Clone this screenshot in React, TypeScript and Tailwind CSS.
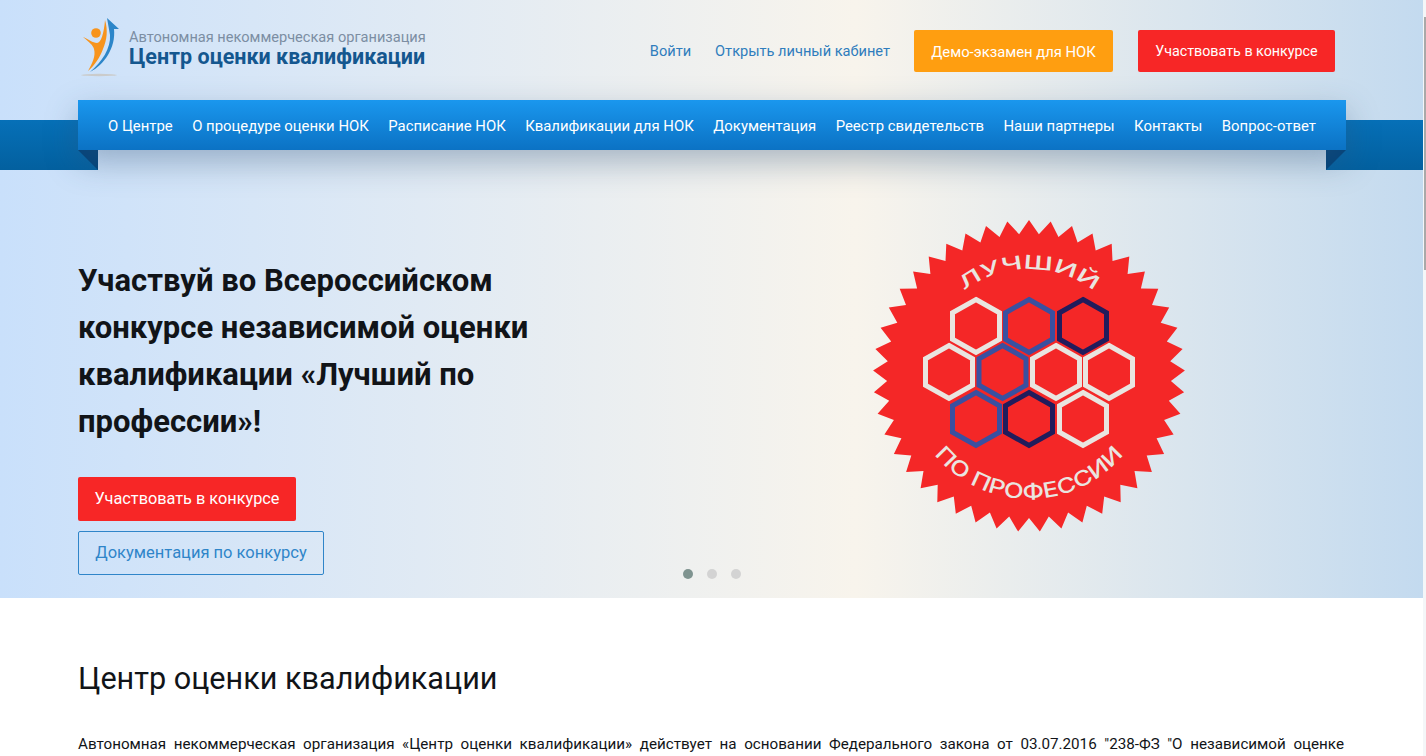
const navItems = [
  'О Центре',
  'О процедуре оценки НОК',
  'Расписание НОК',
  'Квалификации для НОК',
  'Документация',
  'Реестр свидетельств',
  'Наши партнеры',
  'Контакты',
  'Вопрос-ответ',
]

// hexagon centres in the badge, colour per cell
const hexes = [
  { x: 126, y: 126, c: '#e9e5e0' },
  { x: 179, y: 126, c: '#3a50a0' },
  { x: 233, y: 126, c: '#211c5c' },
  { x: 99, y: 172, c: '#e9e5e0' },
  { x: 152.5, y: 172, c: '#3a50a0' },
  { x: 206, y: 172, c: '#e9e5e0' },
  { x: 259, y: 172, c: '#e9e5e0' },
  { x: 126, y: 219, c: '#3a50a0' },
  { x: 179, y: 219, c: '#211c5c' },
  { x: 233, y: 219, c: '#e9e5e0' },
]

function hexPoints(x: number, y: number) {
  const rx = 23.5
  const ry = 26.5
  return [
    [x, y - ry],
    [x + rx, y - ry / 2],
    [x + rx, y + ry / 2],
    [x, y + ry],
    [x - rx, y + ry / 2],
    [x - rx, y - ry / 2],
  ]
    .map(p => p.join(','))
    .join(' ')
}

function starPoints() {
  const pts: string[] = []
  const n = 45
  for (let i = 0; i < n * 2; i++) {
    const r = i % 2 === 0 ? 156 : 142
    const a = (Math.PI * i) / n - Math.PI / 2
    pts.push(`${(179 + r * Math.cos(a)).toFixed(1)},${(176 + r * Math.sin(a)).toFixed(1)}`)
  }
  return pts.join(' ')
}

function Badge() {
  return (
    <svg width="360" height="350" viewBox="0 0 360 350" className="block">
      <polygon points={starPoints()} fill="#f42727" />
      {hexes.map((h, i) => (
        <polygon key={i} points={hexPoints(h.x, h.y)} fill="none" stroke={h.c} strokeWidth="5" />
      ))}
      <defs>
        <path id="badge-top" d="M 72 176 A 107 107 0 0 1 286 176" />
        <path id="badge-bottom" d="M 56 176 A 123 123 0 0 0 302 176" />
      </defs>
      <text fontFamily="Inter, sans-serif" fontSize="19" fontWeight="500" fill="#e9e5e0">
        <textPath href="#badge-top" startOffset="50%" textAnchor="middle" textLength="140" lengthAdjust="spacingAndGlyphs">
          ЛУЧШИЙ
        </textPath>
      </text>
      <text fontFamily="Inter, sans-serif" fontSize="21" fontWeight="500" fill="#e9e5e0">
        <textPath href="#badge-bottom" startOffset="50%" textAnchor="middle" textLength="216" lengthAdjust="spacingAndGlyphs">
          ПО ПРОФЕССИИ
        </textPath>
      </text>
    </svg>
  )
}

function Logo() {
  return (
    <svg width="40" height="62" viewBox="0 0 40 62" className="block">
      <ellipse cx="19" cy="57" rx="18" ry="1.2" fill="#c9c5bf" opacity="0.8" />
      {/* arrow */}
      <path d="M10 54 C24 47 36 30 34 11 L39 11 L27 0 L30 17 C31 30 22 44 10 54 Z" fill="#2c86c9" />
      {/* figure */}
      <circle cx="16" cy="15" r="4.8" fill="#f7941d" />
      <path d="M8 53 C12 46 16 38 14 31 C13 27 9 24 3 19 C8 21 13 25 17 25 C21 25 24 15 25 2 C28 12 27 22 23 31 C20 39 15 47 8 53 Z" fill="#f7941d" />
    </svg>
  )
}

export default function App() {
  return (
    <div className="relative h-[756px] overflow-hidden bg-white font-['Roboto',sans-serif]">
      {/* Hero + header share one gradient */}
      <div className="h-[598px] bg-gradient-to-r from-[#c9e0fb] via-[#f8f4ec] via-60% to-[#c3daef]">
        <header className="flex h-[100px] items-center justify-between pl-[80px] pr-[91px] pt-[2px]">
          <div className="flex items-center gap-[9px] pb-[4px]">
            <Logo />
            <div>
              <div className="text-[14.6px] leading-[16px] text-[#7c8ea3]">Автономная некоммерческая организация</div>
              <div className="text-[21.5px] font-bold leading-[24px] text-[#14578f]">Центр оценки квалификации</div>
            </div>
          </div>
          <div className="flex items-center text-[14.6px]">
            <a className="mr-[24px] pt-[2px] text-[#2f7dbd]">Войти</a>
            <a className="mr-[24px] pt-[2px] text-[#2f7dbd]">Открыть личный кабинет</a>
            <a className="mr-[25px] flex h-[42px] w-[199px] items-center justify-center rounded-[2px] bg-[#ff9e10] pt-[2px] text-[14.8px] text-white">
              Демо-экзамен для НОК
            </a>
            <a className="flex h-[42px] w-[197px] items-center justify-center rounded-[2px] bg-[#f72626] pt-[2px] text-[14.3px] text-white">
              Участвовать в конкурсе
            </a>
          </div>
        </header>

        {/* Ribbon nav */}
        <div className="relative h-[70px]">
          <div className="absolute left-0 top-[20px] h-[50px] w-[98px] bg-gradient-to-b from-[#0670b8] to-[#03609f]" />
          <div className="absolute right-0 top-[20px] h-[50px] w-[100px] bg-gradient-to-b from-[#0670b8] to-[#03609f]" />
          <div className="absolute left-[78px] top-[50px] h-[20px] w-[20px] bg-[#02437a] [clip-path:polygon(0_0,100%_0,100%_100%)]" />
          <div className="absolute left-[1326px] top-[50px] h-[20px] w-[20px] bg-[#02437a] [clip-path:polygon(0_0,100%_0,0_100%)]" />
          <nav className="relative mx-[78px] flex h-[50px] w-[1268px] items-center justify-between bg-gradient-to-b from-[#1a97ee] to-[#0b72c4] px-[30px] pt-[2px] text-[14.9px] text-white shadow-[0_12px_32px_rgba(50,85,120,0.38)]">
            {navItems.map(item => (
              <a key={item} className="whitespace-nowrap">{item}</a>
            ))}
          </nav>
        </div>

        {/* Slide */}
        <section className="relative flex h-[428px] pl-[78px] pt-[87px]">
          <div className="w-[480px]">
            <h2 className="text-[31px] font-bold leading-[47px] text-[#111418]">
              Участвуй во Всероссийском конкурсе независимой оценки квалификации «Лучший по профессии»!
            </h2>
            <a className="mt-[32px] flex h-[44px] w-[218px] items-center justify-center rounded-[2px] bg-[#f72626] pt-[1px] text-[16.3px] text-white">
              Участвовать в конкурсе
            </a>
            <a className="mt-[10px] flex h-[44px] w-[246px] items-center justify-center rounded-[2px] border border-[#2f85c9] pt-[1px] text-[16.5px] text-[#2f85c9]">
              Документация по конкурсу
            </a>
          </div>
          <div className="absolute left-[850px] top-[30px]">
            <Badge />
          </div>
          <div className="absolute bottom-[19px] left-[683px] flex gap-[14px]">
            <span className="size-[10px] rounded-full bg-[#7f9490]" />
            <span className="size-[10px] rounded-full bg-[#d3d3d3]" />
            <span className="size-[10px] rounded-full bg-[#d3d3d3]" />
          </div>
        </section>
      </div>

      {/* About */}
      <section className="pl-[78px] pr-[82px] pt-[61px] text-[#111418]">
        <h1 className="text-[30.6px] leading-[40px]">Центр оценки квалификации</h1>
        <p className="mt-[33px] text-[15.2px] leading-[24px] [text-align-last:justify]">
          Автономная некоммерческая организация «Центр оценки квалификации» действует на основании Федерального закона от 03.07.2016 "238-ФЗ "О независимой оценке
        </p>
      </section>

      {/* Scrollbar */}
      <div className="absolute inset-y-0 right-0 w-[3px] bg-[#f4f6f8] pl-[1px] pt-[17px]">
        <div className="h-[253px] bg-[#a9a9a9]" />
      </div>
    </div>
  )
}
